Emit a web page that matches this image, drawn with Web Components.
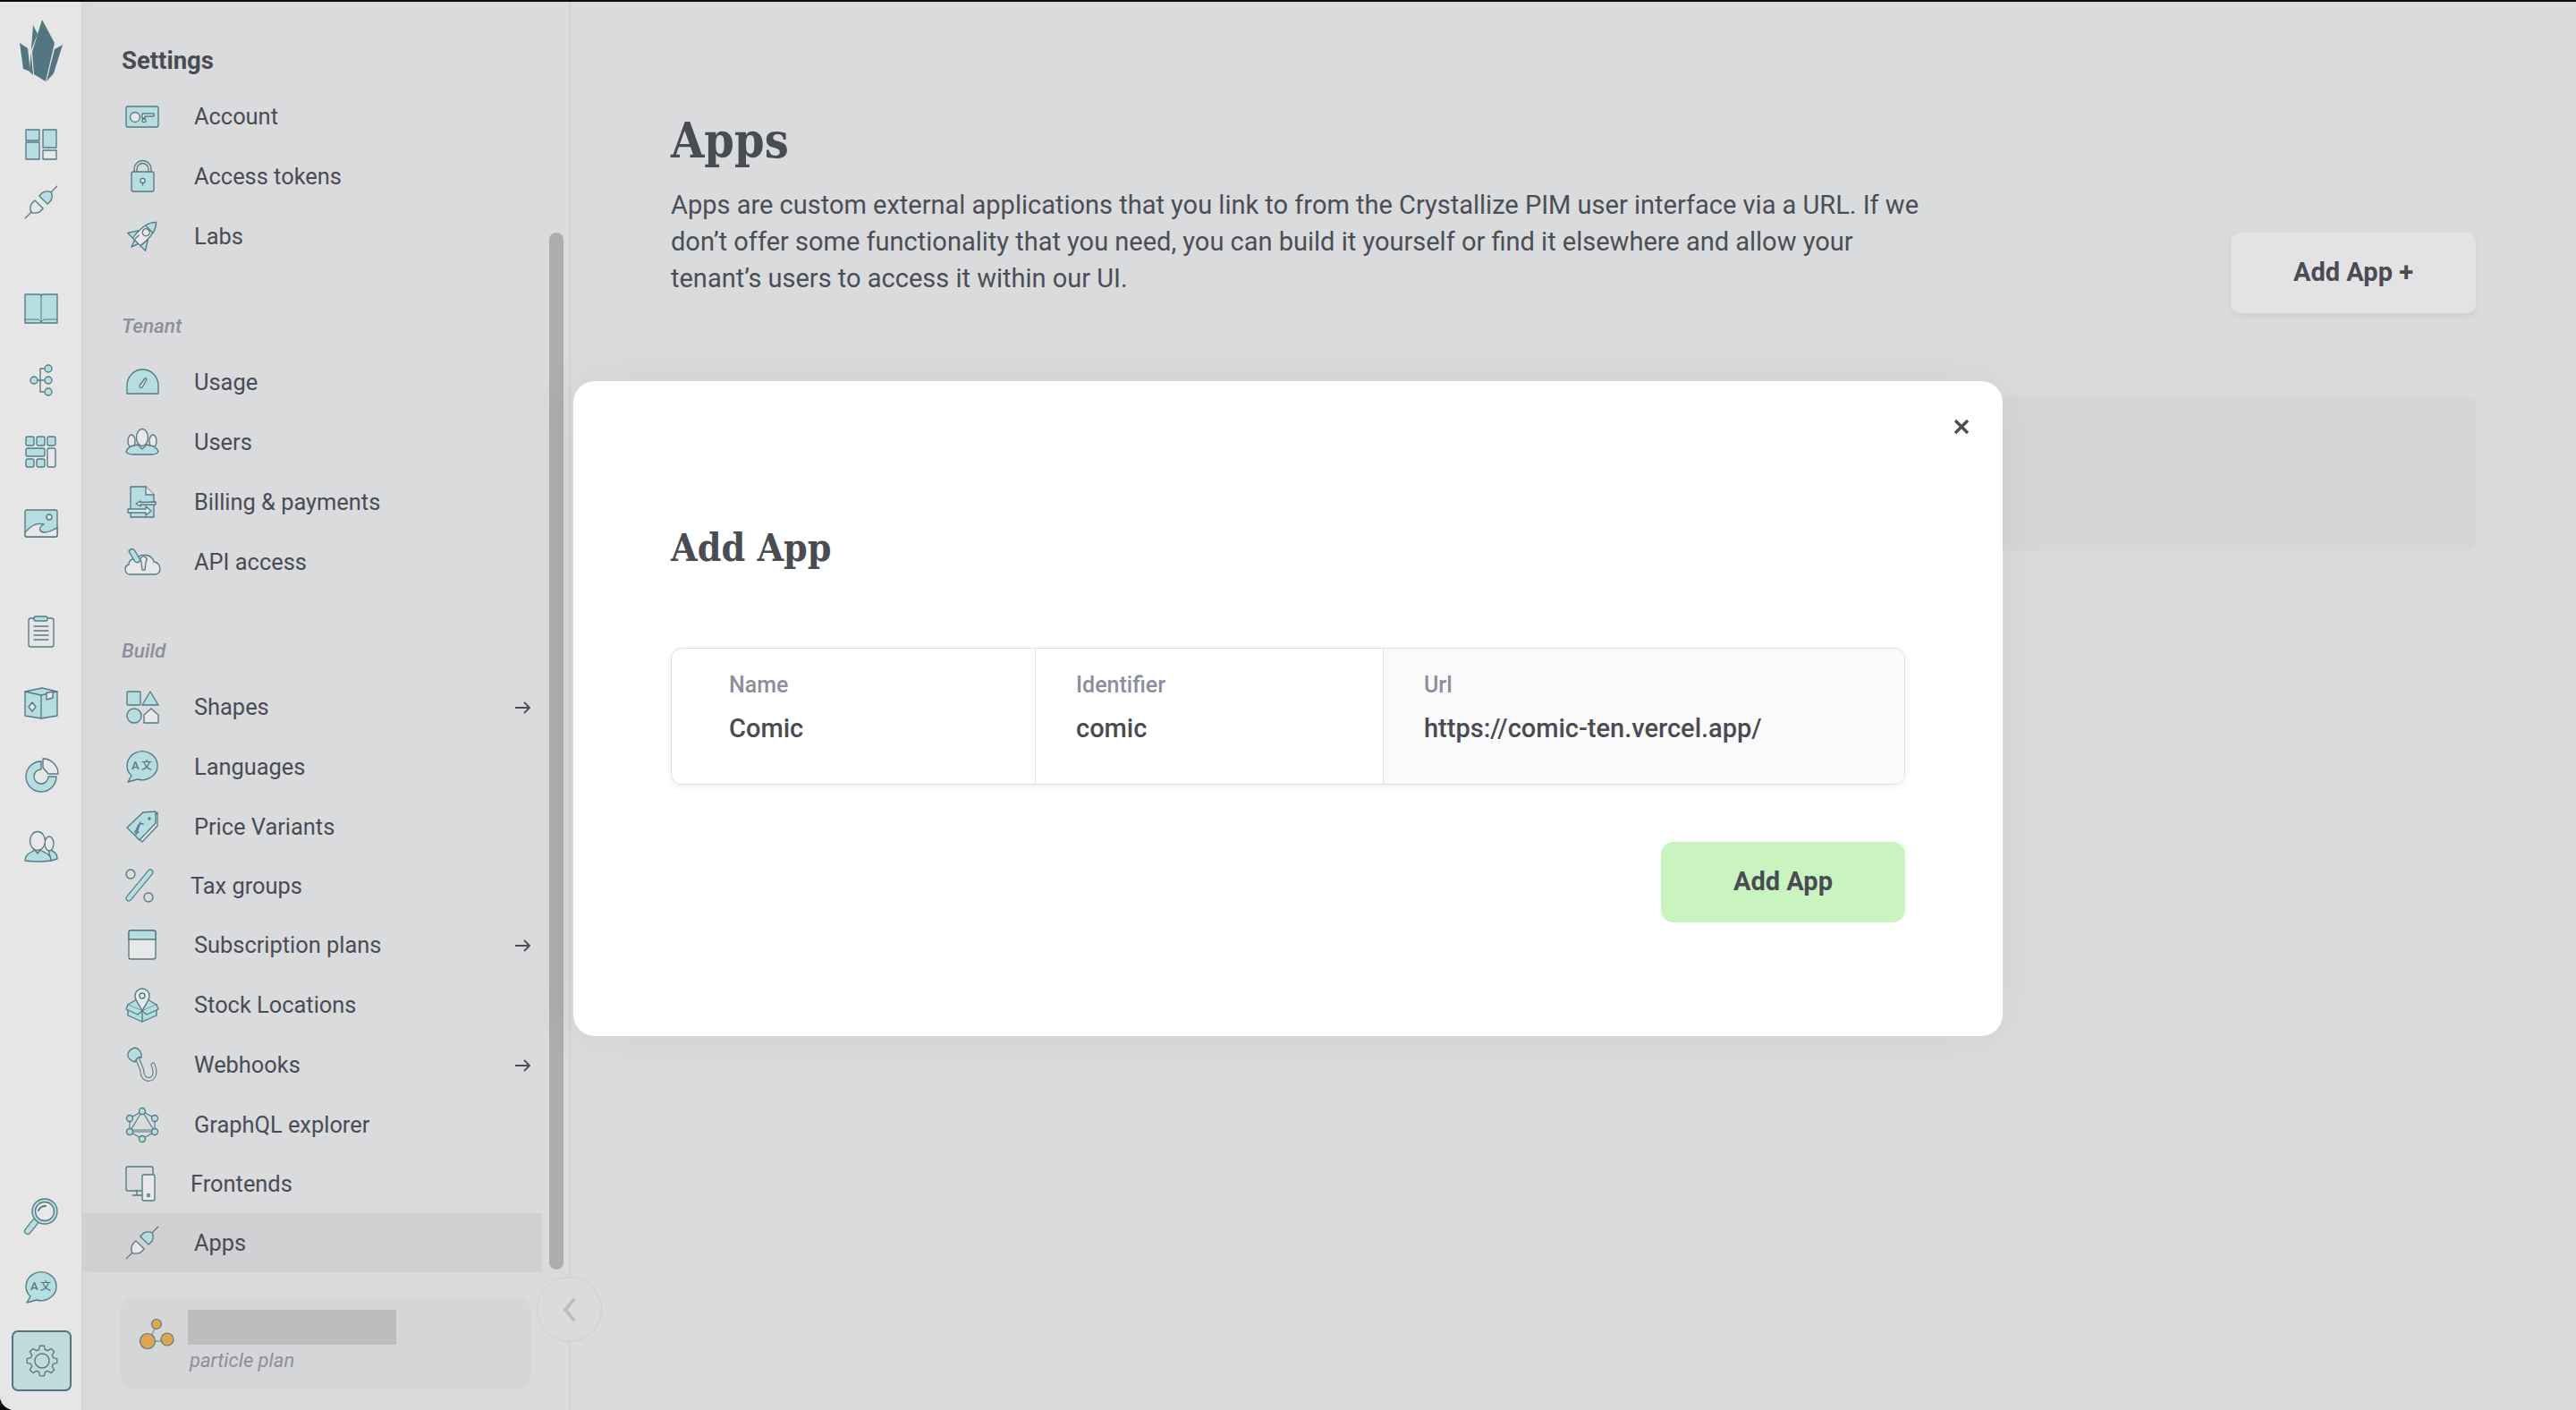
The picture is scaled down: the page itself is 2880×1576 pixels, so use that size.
<!DOCTYPE html>
<html lang="en">
<head>
    <meta charset="UTF-8">
    <title>Apps - Settings</title>
    <style>
        html, body { margin: 0; height: 100%; background: #0b0b0b; }
        body { font-family: Roboto, "Liberation Sans", sans-serif; color: #4a4d56; overflow: hidden; }
    </style>
</head>
<body>
    <app-shell>
        <rail-bar></rail-bar>
        <side-bar>
            <nav-title>Settings</nav-title>
            <nav-row icon="account">Account</nav-row>
            <nav-row icon="lock">Access tokens</nav-row>
            <nav-row icon="rocket">Labs</nav-row>
            <nav-label>Tenant</nav-label>
            <nav-row icon="usage">Usage</nav-row>
            <nav-row icon="users">Users</nav-row>
            <nav-row icon="billing">Billing &amp; payments</nav-row>
            <nav-row icon="api">API access</nav-row>
            <nav-label>Build</nav-label>
            <nav-row icon="shapes" arrow>Shapes</nav-row>
            <nav-row icon="lang">Languages</nav-row>
            <nav-row icon="price">Price Variants</nav-row>
            <nav-row icon="tax" compact>Tax groups</nav-row>
            <nav-row icon="subscription" arrow>Subscription plans</nav-row>
            <nav-row icon="stock">Stock Locations</nav-row>
            <nav-row icon="webhooks" arrow>Webhooks</nav-row>
            <nav-row icon="graphql">GraphQL explorer</nav-row>
            <nav-row icon="frontends" compact>Frontends</nav-row>
            <nav-row icon="plugalt" active>Apps</nav-row>
            <plan-card>particle plan</plan-card>
        </side-bar>
        <main-page>
            <span slot="title">Apps</span>
            Apps are custom external applications that you link to from the Crystallize PIM user interface via a URL. If we don’t offer some functionality that you need, you can build it yourself or find it elsewhere and allow your tenant’s users to access it within our UI.
            <span slot="action">Add App +</span>
        </main-page>
        <app-modal>
            <span slot="title">Add App</span>
            <field-cell label="Name" width="407">Comic</field-cell>
            <field-cell label="Identifier" width="389">comic</field-cell>
            <field-cell label="Url" shaded>https://comic-ten.vercel.app/</field-cell>
            <span slot="submit">Add App</span>
        </app-modal>
    </app-shell>

    <script>
        const S = 'stroke="#557a84" stroke-width="1.35" stroke-linejoin="round" stroke-linecap="round"';
        const T = '#b6dde0'; // teal fill
        const L = '#e8e8e8'; // light fill

        function gearPath(cx, cy, outer, inner, teeth) {
            let d = '';
            const step = Math.PI * 2 / teeth;
            for (let i = 0; i < teeth; i++) {
                const a = i * step - Math.PI / 2;
                const pts = [[inner, a - step * .34], [outer, a - step * .18], [outer, a + step * .18], [inner, a + step * .34]];
                pts.forEach((p, j) => {
                    const x = (cx + p[0] * Math.cos(p[1])).toFixed(1);
                    const y = (cy + p[0] * Math.sin(p[1])).toFixed(1);
                    d += (i === 0 && j === 0 ? 'M' : 'L') + x + ' ' + y + ' ';
                });
            }
            return d + 'Z';
        }

        function plug(top, bottom) {
            return `<g transform="rotate(45 18 18)" ${S}>
                <path d="M18 3V-7M18 33V43" fill="none"/>
                <path d="M11.5 14.5h13v-4c0-4-3.500-7-6.500-8.500c-3 1.500-6.500 4.500-6.500 8.500z" fill="${top}"/>
                <path d="M11.500 21.500h13v4c0 4-3.500 7-6.500 8.500c-3-1.500-6.500-4.500-6.500-8.500z" fill="${bottom}"/>
            </g>`;
        }

        const ICONS = {
            dashboard: [36, 35, `<g ${S} fill="${T}"><rect x="1" y="1" width="15" height="12"/><rect x="20" y="1" width="15" height="20"/><rect x="1" y="15" width="15" height="19"/><rect x="20" y="24" width="15" height="10" fill="${L}"/></g>`],
            plug: [36, 36, plug(T, 'none')],
            plugalt: [36, 36, plug(T, L)],
            book: [38, 34, `<g ${S} fill="${T}"><path d="M1 1H17Q19 1 19 3Q19 1 21 1H37V33H21Q19 33 19 32Q19 33 17 33H1Z"/><path d="M19 3V32M1 29H16L19 32L22 29H37" fill="none" stroke-width="1"/></g>`],
            tree: [26, 36, `<g ${S} fill="${T}"><path d="M9 18H16M12 5V31M12 5H16M12 31H16" fill="none"/><circle cx="5" cy="18" r="4"/><circle cx="21" cy="5" r="4"/><circle cx="21" cy="18" r="4"/><circle cx="21" cy="31" r="4"/></g>`],
            grid: [35, 36, `<g ${S} fill="${T}"><rect x="1" y="1" width="9" height="10" rx="2"/><rect x="13" y="1" width="9" height="10" rx="2"/><rect x="25" y="1" width="9" height="10" rx="2"/><rect x="1" y="14" width="21" height="9" rx="2"/><rect x="25" y="14" width="9" height="21" rx="2" fill="${L}"/><rect x="1" y="26" width="9" height="9" rx="2"/><rect x="13" y="26" width="9" height="9" rx="2"/></g>`],
            image: [38, 32, `<g ${S}><rect x="1" y="1" width="36" height="30" rx="2" fill="${T}"/><circle cx="28" cy="9" r="3" fill="${L}"/><path d="M1 26C8 18 15 15 22 17C16 20 16 26 23 26C29 26 32 23 37 21V29Q37 31 35 31H3Q1 31 1 29Z" fill="${L}"/></g>`],
            clipboard: [30, 36, `<g ${S}><rect x="1" y="3" width="28" height="32" rx="2.500" fill="none"/><rect x="7" y="1" width="15" height="5" rx="2" fill="${T}"/><path d="M7 12H23M7 17H23M7 22H23M7 27H23" fill="none"/></g>`],
            box: [38, 36, `<g ${S} fill="${T}"><path d="M1 5L20 1L37 5V32L19 35L1 32Z"/><path d="M1 5L19 9L37 5M19 9V35" fill="none"/><path d="M25 6.500L32 5V12L25 14Z" fill="${L}"/><path d="M9 17L13 22L9 27L5 22Z" fill="${L}"/></g>`],
            pie: [38, 38, `<g ${S} fill="${T}"><path d="M19 4A17 17 0 1 0 36 21H27A8 8 0 1 1 19 13Z"/><path d="M21 1A17 17 0 0 1 38 18H27L21 11Z" fill="${L}"/></g>`],
            user: [38, 34, `<g ${S}><path d="M27 20C32 22 37 24 37 31L30 33Z" fill="${T}"/><ellipse cx="28" cy="14" rx="5" ry="8" fill="${L}"/><path d="M1 33C1 25 8 24 12 21L15 25L18 21C22 24 30 25 30 33Q15 35 1 33Z" fill="${T}"/><ellipse cx="15" cy="11" rx="8.500" ry="10.500" fill="${L}"/></g>`],
            search: [38, 40, `<g stroke-linecap="round"><path d="M12 27L4 37" stroke="#557a84" stroke-width="8"/><path d="M12 27L4 37" stroke="${T}" stroke-width="5.500"/></g><g ${S}><circle cx="23" cy="15" r="14" fill="${T}"/><circle cx="23" cy="15" r="10.500" fill="${L}"/><path d="M16 14Q18 9 24 9" fill="none" stroke-width="2"/></g>`],
            lang: [38, 36, `<g ${S}><path d="M3 35L7 28A17 16 0 1 1 14 32Z" fill="${T}"/></g><text x="7" y="21" font-family="Roboto, sans-serif" font-size="13" font-weight="500" fill="#557a84">A</text><text x="18" y="21" font-family="'Noto Sans CJK SC', sans-serif" font-size="12" font-weight="500" fill="#557a84">文</text>`],
            gear: [36, 36, `<g ${S}><path d="${gearPath(18, 18, 17, 13, 8)}" fill="none"/><circle cx="18" cy="18" r="8" fill="none"/></g>`],
            account: [38, 25, `<g ${S}><rect x="1" y="1" width="36" height="23" rx="2" fill="${T}"/><circle cx="11" cy="13" r="5.500" fill="${L}"/><path d="M19 9H32V12H22V14H19Z" fill="${L}"/><rect x="19" y="15" width="4" height="3.500" rx="1.500" fill="${L}"/></g>`],
            lock: [27, 36, `<g ${S}><path d="M4 13V10A9.500 9.500 0 0 1 23 10V13M7 13V10A6.500 6.500 0 0 1 20 10V13" fill="none"/><rect x="1" y="13" width="25" height="22" rx="2" fill="${T}"/><circle cx="13.500" cy="23" r="2.600" fill="${L}"/><path d="M13.500 25V28" fill="none"/></g>`],
            rocket: [36, 36, `<g transform="rotate(45 18 18)" ${S}><path d="M11 16L4 27H12ZM25 16L32 27H24Z" fill="${T}"/><path d="M15 27L18 35L21 27Z" fill="${T}"/><path d="M18 -4C25 4 26 15 24 27H12C10 15 11 4 18 -4Z" fill="${L}"/><path d="M18 -4C21 -1 23 3 24 7H12C13 3 15 -1 18 -4Z" fill="${T}"/><circle cx="18" cy="12" r="4" fill="${L}"/><path d="M14.500 20V27" fill="none"/></g>`],
            usage: [37, 29, `<g ${S}><path d="M1 28V19A17.500 18 0 0 1 36 19V28Z" fill="${T}"/><path d="M15 19L21 11Q23 10 23 12L18 21Q15 22 15 19Z" fill="${L}"/></g>`],
            users: [38, 30, `<g ${S}><ellipse cx="7" cy="14" rx="4" ry="7" fill="${L}"/><ellipse cx="31" cy="14" rx="4" ry="7" fill="${L}"/><path d="M1 26Q3 20 10 19L14 18L19 23L24 18L28 19Q35 20 37 26Q35 29 30 29H8Q3 29 1 26Z" fill="${T}"/><ellipse cx="19" cy="10" rx="6.500" ry="9.500" fill="${L}"/></g>`],
            billing: [36, 36, `<g ${S}><path d="M5 1H22L31 10V35H5Z" fill="${T}"/><path d="M22 1V10H31" fill="${L}"/><path d="M16 17L11 20L16 23V21H33V18L16 18.500ZM22 23L28 28L22 33V30H2V26H22Z" fill="${L}"/></g>`],
            api: [43, 30, `<g ${S}><path d="M8 29C1 29 0 20 6 18C6 13 10 11 15 12C18 5 32 6 34 15C42 15 44 29 35 29Z" fill="${L}"/><path d="M6 3Q10 -2 13 3L19 13Q17 17 13 15Z" fill="${T}"/><path d="M20 15a3.500 3.500 0 1 1 5 0L24 24H21Z" fill="${L}"/></g>`],
            shapes: [37, 37, `<g ${S}><rect x="1" y="1" width="15" height="15" rx="1" fill="${T}"/><path d="M27 1L36 16H18Z" fill="${T}"/><circle cx="9" cy="28" r="8" fill="${T}"/><path d="M28 20L36 27V36H20V27Z" fill="${L}"/></g>`],
            price: [36, 36, `<g ${S}><path d="M35 2V17L18 35L12 30Z" fill="${L}"/><path d="M33 1V14L15 33L1 19L19 2Z" fill="${T}"/><circle cx="26" cy="9" r="1" fill="#557a84"/><path d="M19 15Q14 14 13 18T10 23Q9 26 14 24M16 13L11 27" fill="none"/></g>`],
            tax: [32, 38, `<path d="M4 33L28 4" stroke="#557a84" stroke-width="7" stroke-linecap="round"/><path d="M4 33L28 4" stroke="${T}" stroke-width="4.800" stroke-linecap="round"/><g ${S} fill="none"><circle cx="6" cy="6" r="5"/><circle cx="26" cy="32" r="5"/></g>`],
            subscription: [32, 34, `<g ${S}><rect x="1" y="1" width="30" height="32" rx="2.500" fill="${L}"/><path d="M1 11V3.500Q1 1 3.500 1H28.500Q31 1 31 3.500V11Z" fill="${T}"/></g>`],
            stock: [36, 38, `<g ${S}><path d="M18 38L2 31V19L18 26L34 19V31Z" fill="${T}"/><path d="M2 19L12 13L18 19L24 13L34 19L18 26Z" fill="${T}"/><path d="M2 19L-0 24L13 30L18 26M34 19L36 24L23 30L18 26" fill="${T}"/><path d="M18 26C14 18 10 14 10 9A8 8 0 0 1 26 9C26 14 22 18 18 26Z" fill="${L}"/><circle cx="18" cy="9" r="3" fill="none"/><path d="M18 26V38" fill="none"/></g>`],
            webhooks: [35, 38, `<path d="M11 10C13 18 17 22 17 28C18 38 31 38 31 27C31 23 30 21 29 19" fill="none" stroke="#557a84" stroke-width="5" stroke-linecap="round"/><path d="M11 10C13 18 17 22 17 28C18 38 31 38 31 27C31 23 30 21 29 19" fill="none" stroke="#dadbdd" stroke-width="2.800" stroke-linecap="round"/><g ${S}><path d="M9 0C14 1 17 6 16 11C12 10 10 13 9 16C4 15 0 11 1 7C2 3 5 1 9 0Z" fill="${T}"/></g>`],
            graphql: [36, 38, `<g ${S} fill="none"><path d="M18 4L32 12V27L18 35L4 27V12ZM18 4L32 27H4Z" stroke-width="1.200"/><path d="M5 25H31" stroke-width="1.200"/><g fill="${T}"><circle cx="18" cy="4" r="3.500"/><circle cx="32" cy="12" r="3.500"/><circle cx="32" cy="27" r="3.500"/><circle cx="18" cy="35" r="3.500"/><circle cx="4" cy="27" r="3.500"/><circle cx="4" cy="12" r="3.500"/></g></g>`],
            frontends: [34, 40, `<g ${S}><path d="M31 10V3Q31 1 29 1H3Q1 1 1 3V26Q1 28 3 28H19" fill="none"/><path d="M13 28V32M8 33H19" fill="none"/><rect x="19" y="10" width="14" height="29" rx="2" fill="${L}"/><circle cx="26" cy="33" r="1.500" fill="none"/></g>`],
            molecule: [40, 36, `<path d="M20 8L12 24M12 26H30" stroke="#8a9a98" stroke-width="1.500"/><g stroke="#557a84" stroke-width="1.200" fill="#e0a64d"><circle cx="10" cy="26" r="8.500"/><circle cx="32" cy="24" r="7"/><circle cx="20" cy="7" r="5.500"/></g>`],
            logo: [50, 70, `<g fill="#52757f" transform="translate(-20 -22)"><path d="M21 48L30 54L33 80L25 77Z"/><path d="M36 28L41 38L33.500 57L36 84L32 80Z"/><path d="M46 22L60 48L50 91L37 83L35 58Z"/><path d="M69 50L60 55L51 91L59 82Z"/></g>`],
            arrow: [18, 14, `<path d="M1 7H17M11 1L17 7L11 13" fill="none" stroke="#4a4d56" stroke-width="1.800"/>`],
            close: [18, 18, `<path d="M2 2L16 16M16 2L2 16" fill="none" stroke="#4a4d56" stroke-width="3.200"/>`],
            chevron: [16, 28, `<path d="M13 2L3 14L13 26" fill="none" stroke="#bcbdbf" stroke-width="4"/>`]
        };

        // all the little pictures come from here
        class CrystalIcon extends HTMLElement {
            connectedCallback() {
                const [w, h, body] = ICONS[this.getAttribute('name')];
                this.attachShadow({ mode: 'open' }).innerHTML = `
                    <style>:host { display: block; line-height: 0; } svg { overflow: visible; display: block; }</style>
                    <svg width="${w}" height="${h}" viewBox="0 0 ${w} ${h}" xmlns="http://www.w3.org/2000/svg">${body}</svg>`;
            }
        }

        class AppShell extends HTMLElement {
            constructor() {
                super();
                this.attachShadow({ mode: 'open' }).innerHTML = `
                    <style>
                        :host { display: flex; position: relative; width: 2880px; height: 1574px; margin-top: 2px; background: #dadbdd; border-bottom-left-radius: 16px; overflow: hidden; }
                    </style>
                    <slot></slot>`;
            }
        }

        class RailBar extends HTMLElement {
            constructor() {
                super();
                const item = (name, h) => `<div class="item" style="height:${h}px"><crystal-icon name="${name}"></crystal-icon></div>`;
                this.attachShadow({ mode: 'open' }).innerHTML = `
                    <style>
                        :host { display: flex; flex-direction: column; flex: none; width: 91px; height: 100%; background: #e6e6e6; box-sizing: border-box; }
                        .item { display: flex; align-items: center; justify-content: center; }
                        .logo { height: 127px; padding-bottom: 0; display: flex; justify-content: center; padding-top: 20px; box-sizing: border-box; }
                        .group { margin-top: 47px; }
                        .first { margin-top: 0; }
                        .spacer { flex: 1; }
                        .active { width: 63px; height: 64px; margin: 8px 0 21px 13px; background: #c1dadc; border: 2px solid #52757f; border-radius: 7px; display: flex; align-items: center; justify-content: center; }
                    </style>
                    <div class="logo"><crystal-icon name="logo"></crystal-icon></div>
                    <div class="group first">${item('dashboard', 65)}${item('plug', 64)}</div>
                    <div class="group">${item('book', 80)}${item('tree', 80)}${item('grid', 80)}${item('image', 80)}</div>
                    <div class="group" style="margin-top:41px">${item('clipboard', 80)}${item('box', 80)}${item('pie', 80)}${item('user', 80)}</div>
                    <div class="spacer"></div>
                    ${item('search', 80)}${item('lang', 80)}
                    <div class="active"><crystal-icon name="gear"></crystal-icon></div>`;
            }
        }

        class SideBar extends HTMLElement {
            constructor() {
                super();
                this.attachShadow({ mode: 'open' }).innerHTML = `
                    <style>
                        :host { display: block; position: relative; flex: none; width: 545px; height: 100%; border-right: 2px solid #d1d2d4; box-shadow: inset 10px 0 12px -8px rgba(0,0,0,.03); }
                        .thumb { position: absolute; left: 523px; top: 258px; width: 16px; height: 1159px; border-radius: 8px; background: #adadae; }
                        .collapse { position: absolute; left: 509px; top: 1425px; width: 71px; height: 71px; border-radius: 50%; border: 1px solid #cdced0; background: #dadbdd; display: flex; align-items: center; justify-content: center; z-index: 1; }
                    </style>
                    <slot></slot>
                    <div class="thumb"></div>
                    <div class="collapse"><crystal-icon name="chevron"></crystal-icon></div>`;
            }
        }

        class NavTitle extends HTMLElement {
            constructor() {
                super();
                this.attachShadow({ mode: 'open' }).innerHTML = `
                    <style>:host { display: block; height: 94.500px; padding: 48px 0 0 45px; box-sizing: border-box; font-size: 27.500px; font-weight: 700; line-height: 36px; color: #4a4c55; }</style>
                    <slot></slot>`;
            }
        }

        class NavLabel extends HTMLElement {
            constructor() {
                super();
                this.attachShadow({ mode: 'open' }).innerHTML = `
                    <style>:host { display: block; height: 95.500px; padding: 51px 0 0 45px; box-sizing: border-box; font-size: 22.500px; font-style: italic; font-weight: 500; line-height: 30px; color: #8d8e9d; }</style>
                    <slot></slot>`;
            }
        }

        class NavRow extends HTMLElement {
            constructor() {
                super();
                this.attachShadow({ mode: 'open' }).innerHTML = `
                    <style>
                        :host { display: flex; align-items: center; width: 515px; height: 67px; padding: 0 13px 0 46px; box-sizing: border-box; font-size: 25.400px; color: #4a4c55; }
                        :host([active]) { background: #d1d1d3; height: 66.500px; }
                        :host([compact]) { height: 65px; padding-left: 49px; }
                        .icon { width: 44px; margin-right: 36px; display: flex; justify-content: center; flex: none; }
                        :host([compact]) .icon { width: 73px; margin-right: 0; justify-content: flex-start; }
                        .arrow { margin-left: auto; margin-top: 2px; }
                    </style>
                    <div class="icon"><crystal-icon name="${this.getAttribute('icon')}"></crystal-icon></div>
                    <slot></slot>
                    ${this.hasAttribute('arrow') ? '<crystal-icon class="arrow" name="arrow"></crystal-icon>' : ''}`;
            }
        }

        class PlanCard extends HTMLElement {
            constructor() {
                super();
                this.attachShadow({ mode: 'open' }).innerHTML = `
                    <style>
                        :host { display: flex; width: 458px; height: 102px; margin: 29px 0 0 44px; padding: 13px 0 0 20px; box-sizing: border-box; background: #d5d6d8; border-radius: 14px; }
                        .pic { width: 55px; padding-top: 9px; flex: none; }
                        .name { width: 233px; height: 39px; background: #bdbdbd; }
                        .plan { font-size: 22px; font-style: italic; line-height: 30px; margin: 3px 0 0 2px; color: #8d8e9d; }
                    </style>
                    <div class="pic"><crystal-icon name="molecule"></crystal-icon></div>
                    <div><div class="name"></div><div class="plan"><slot></slot></div></div>`;
            }
        }

        class MainPage extends HTMLElement {
            constructor() {
                super();
                this.attachShadow({ mode: 'open' }).innerHTML = `
                    <style>
                        :host { display: block; flex: 1; padding: 0 112px 0 112px; box-sizing: border-box; }
                        .head { display: flex; justify-content: space-between; align-items: flex-end; height: 348px; }
                        .copy { align-self: flex-start; }
                        h1 { margin: 0; padding-top: 122px; font: 700 53.500px/68px "DejaVu Serif Condensed", "DejaVu Serif", serif; font-stretch: condensed; color: #494c53; }
                        p { margin: 17px 0 0; width: 1410px; font-size: 29px; line-height: 41px; color: #4b4e55; }
                        .action { width: 274px; height: 90px; padding-bottom: 2px; box-sizing: border-box; background: #e3e3e4; border-radius: 10px; box-shadow: 0 3px 6px rgba(0,0,0,.07); font-size: 29px; font-weight: 700; color: #4a4c55; display: flex; align-items: center; justify-content: center; }
                        .panel { height: 171px; margin-top: 94px; background: #d5d6d8; border-radius: 8px; }
                    </style>
                    <div class="head">
                        <div class="copy"><h1><slot name="title"></slot></h1><p><slot></slot></p></div>
                        <div class="action"><slot name="action"></slot></div>
                    </div>
                    <div class="panel"></div>`;
            }
        }

        // sits on top of the page, so this one is absolute
        class AppModal extends HTMLElement {
            constructor() {
                super();
                this.attachShadow({ mode: 'open' }).innerHTML = `
                    <style>
                        :host { position: absolute; left: 641px; top: 424px; width: 1598px; height: 732px; padding: 0 109px; box-sizing: border-box; background: #fff; border-radius: 24px; box-shadow: 0 0 60px rgba(0,0,0,.05); z-index: 2; }
                        .close { position: absolute; right: 37px; top: 42px; }
                        h2 { margin: 0; padding-top: 156px; font: 700 42.500px/60px "DejaVu Serif Condensed", "DejaVu Serif", serif; font-stretch: condensed; color: #494c53; }
                        .table { display: flex; height: 153px; margin-top: 82px; border: 1px solid #dedede; border-radius: 12px; box-shadow: 0 3px 6px rgba(0,0,0,.06); overflow: hidden; box-sizing: border-box; }
                        .foot { display: flex; justify-content: flex-end; margin-top: 64px; }
                        .submit { width: 273px; height: 90px; padding-bottom: 2px; box-sizing: border-box; background: #c9f4bf; border-radius: 14px; font-size: 29px; font-weight: 700; color: #4a4c55; display: flex; align-items: center; justify-content: center; }
                    </style>
                    <crystal-icon class="close" name="close"></crystal-icon>
                    <h2><slot name="title"></slot></h2>
                    <div class="table"><slot></slot></div>
                    <div class="foot"><div class="submit"><slot name="submit"></slot></div></div>`;
            }
        }

        class FieldCell extends HTMLElement {
            constructor() {
                super();
                const w = this.getAttribute('width');
                this.attachShadow({ mode: 'open' }).innerHTML = `
                    <style>
                        :host { display: block; ${w ? `width: ${w}px; flex: none; border-right: 1px solid #e4e4e4;` : 'flex: 1;'} padding: 26px 0 0 ${w === '407' ? 64 : 45}px; box-sizing: border-box; }
                        :host([shaded]) { background: #fafafa; }
                        .label { font-size: 25px; font-weight: 500; line-height: 30px; color: #8d8e9d; }
                        .value { font-size: 29px; font-weight: 500; line-height: 34px; margin-top: 16px; color: #4a4c55; }
                    </style>
                    <div class="label">${this.getAttribute('label')}</div>
                    <div class="value"><slot></slot></div>`;
            }
        }

        customElements.define('crystal-icon', CrystalIcon);
        customElements.define('app-shell', AppShell);
        customElements.define('rail-bar', RailBar);
        customElements.define('side-bar', SideBar);
        customElements.define('nav-title', NavTitle);
        customElements.define('nav-label', NavLabel);
        customElements.define('nav-row', NavRow);
        customElements.define('plan-card', PlanCard);
        customElements.define('main-page', MainPage);
        customElements.define('app-modal', AppModal);
        customElements.define('field-cell', FieldCell);
    </script>
</body>
</html>
